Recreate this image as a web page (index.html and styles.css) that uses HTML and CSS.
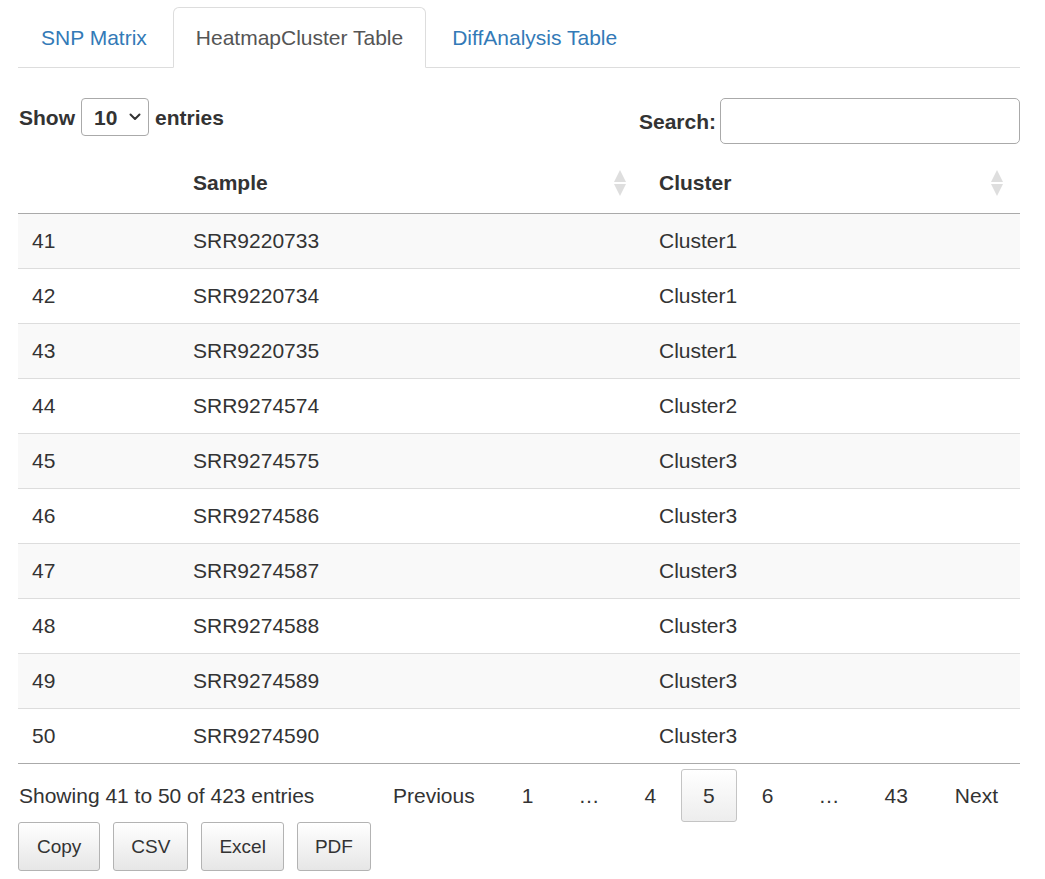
FILE: index.html
```html
<!DOCTYPE html>
<html>
<head>
<meta charset="utf-8">
<link rel="stylesheet" href="styles.css">
</head>
<body>
<div class="container">
  <ul class="nav-tabs">
    <li class="tab"><a class="tab-link">SNP Matrix</a></li>
    <li class="tab active"><a class="tab-link">HeatmapCluster Table</a></li>
    <li class="tab"><a class="tab-link">DiffAnalysis Table</a></li>
  </ul>
  <div class="dt-wrapper">
    <div class="dt-top">
      <div class="dt-length">
        <span class="lbl">Show</span>
        <div class="select"><span class="select-val">10</span><svg class="chev" width="12" height="8" viewBox="0 0 12 8"><path d="M1.5 1.5 L6 6 L10.5 1.5" fill="none" stroke="#333" stroke-width="2" stroke-linecap="round" stroke-linejoin="round"/></svg></div>
        <span class="lbl">entries</span>
      </div>
      <div class="dt-filter">
        <span class="lbl">Search:</span>
        <div class="search-input"></div>
      </div>
    </div>
    <table class="dt-table">
      <colgroup><col class="c1"><col class="c2"><col class="c3"></colgroup>
      <thead>
        <tr>
          <th></th>
          <th><div class="th-in"><span>Sample</span><span class="sort"><i class="up"></i><i class="down"></i></span></div></th>
          <th><div class="th-in"><span>Cluster</span><span class="sort"><i class="up"></i><i class="down"></i></span></div></th>
        </tr>
      </thead>
      <tbody>
        <tr class="odd"><td>41</td><td>SRR9220733</td><td>Cluster1</td></tr>
        <tr><td>42</td><td>SRR9220734</td><td>Cluster1</td></tr>
        <tr class="odd"><td>43</td><td>SRR9220735</td><td>Cluster1</td></tr>
        <tr><td>44</td><td>SRR9274574</td><td>Cluster2</td></tr>
        <tr class="odd"><td>45</td><td>SRR9274575</td><td>Cluster3</td></tr>
        <tr><td>46</td><td>SRR9274586</td><td>Cluster3</td></tr>
        <tr class="odd"><td>47</td><td>SRR9274587</td><td>Cluster3</td></tr>
        <tr><td>48</td><td>SRR9274588</td><td>Cluster3</td></tr>
        <tr class="odd"><td>49</td><td>SRR9274589</td><td>Cluster3</td></tr>
        <tr class="last"><td>50</td><td>SRR9274590</td><td>Cluster3</td></tr>
      </tbody>
    </table>
    <div class="dt-bottom">
      <div class="dt-info">Showing 41 to 50 of 423 entries</div>
      <div class="dt-paginate">
        <a class="pbtn">Previous</a>
        <a class="pbtn">1</a>
        <span class="ellipsis">…</span>
        <a class="pbtn">4</a>
        <a class="pbtn current">5</a>
        <a class="pbtn">6</a>
        <span class="ellipsis">…</span>
        <a class="pbtn">43</a>
        <a class="pbtn">Next</a>
      </div>
    </div>
    <div class="dt-buttons">
      <button class="dt-button">Copy</button>
      <button class="dt-button">CSV</button>
      <button class="dt-button">Excel</button>
      <button class="dt-button">PDF</button>
    </div>
  </div>
</div>
</body>
</html>
```

FILE: styles.css
```css
* { box-sizing: border-box; }
html, body {
  margin: 0;
  padding: 0;
  background: #fff;
}
body {
  font-family: "Liberation Sans", Arial, sans-serif;
  font-size: 21px;
  line-height: 29px;
  color: #333;
}
.container {
  width: 1002px;
  margin-left: 18px;
  padding-top: 7px;
}
.nav-tabs {
  list-style: none;
  margin: 0;
  padding: 0;
  display: flex;
  border-bottom: 1px solid #ddd;
}
.tab {
  margin-bottom: -1px;
  margin-right: 3px;
}
.tab-link {
  display: block;
  padding: 15px 22px;
  line-height: 29px;
  border: 1px solid transparent;
  border-radius: 6px 6px 0 0;
  color: #337ab7;
  cursor: pointer;
}
.tab.active .tab-link {
  color: #555;
  background: #fff;
  border-color: #ddd #ddd transparent #ddd;
}
.dt-top {
  margin-top: 30px;
  display: flex;
  justify-content: space-between;
  align-items: flex-start;
}
.lbl {
  font-weight: bold;
}
.dt-length {
  display: flex;
  align-items: center;
  height: 38px;
  margin-left: 1px;
}
.select {
  width: 68px;
  height: 38px;
  margin: 0 6px;
  border: 1px solid #aaa;
  border-radius: 4px;
  display: flex;
  align-items: center;
  padding-left: 12px;
  font-weight: bold;
}
.select-val {
  width: 35px;
}
.chev {
  display: block;
}
.dt-filter {
  display: flex;
  align-items: center;
  height: 46px;
}
.search-input {
  width: 300px;
  height: 46px;
  margin-left: 4px;
  border: 1px solid #aaa;
  border-radius: 5px;
}
.dt-table {
  margin-top: 12px;
  width: 1002px;
  border-collapse: collapse;
  table-layout: fixed;
}
.c1 { width: 161px; }
.c2 { width: 466px; }
.c3 { width: 375px; }
.dt-table th {
  text-align: left;
  font-weight: bold;
  padding: 12px 0 16px 14px;
  line-height: 29px;
  border-bottom: 1px solid #aaa;
}
.th-in {
  display: flex;
  justify-content: space-between;
  align-items: center;
}
.sort {
  display: flex;
  flex-direction: column;
  align-items: center;
  gap: 2px;
  margin-top: 1px;
  margin-right: 19px;
}
.dt-table th:last-child .sort {
  margin-right: 17px;
}
.sort i {
  display: block;
  width: 0;
  height: 0;
  border-left: 6px solid transparent;
  border-right: 6px solid transparent;
}
.sort .up {
  border-bottom: 12px solid #dedede;
}
.sort .down {
  border-top: 12px solid #dedede;
}
.dt-table td {
  padding: 12px 14px 13px 14px;
  line-height: 29px;
  border-bottom: 1px solid #ddd;
}
.dt-table tr.odd td {
  background: #f9f9f9;
}
.dt-table tr.last td {
  border-bottom: 1px solid #aaa;
}
.dt-bottom {
  display: flex;
  justify-content: space-between;
  align-items: center;
  margin-top: 5px;
  height: 53px;
}
.dt-info {
  margin-left: 1px;
}
.dt-paginate {
  display: flex;
  align-items: center;
}
.pbtn {
  display: block;
  margin-left: 3px;
  padding: 11px 21px;
  line-height: 29px;
  border: 1px solid transparent;
  border-radius: 3px;
  color: #333;
  cursor: pointer;
}
.pbtn.current {
  border-color: #c4c4c4;
  background: linear-gradient(to bottom, #ffffff 0%, #ededed 100%);
}
.ellipsis {
  padding: 0 20px;
  margin-left: 3px;
}
.dt-buttons {
  display: flex;
  gap: 13px;
}
.dt-button {
  height: 49px;
  padding: 0 17px;
  font-family: "Liberation Sans", Arial, sans-serif;
  font-size: 19px;
  color: #333;
  border: 1px solid #b3b3b3;
  border-radius: 3px;
  background: linear-gradient(to bottom, #ffffff 0%, #e6e6e6 100%);
}
.dt-button:first-child {
  padding: 0 18px;
}
```
